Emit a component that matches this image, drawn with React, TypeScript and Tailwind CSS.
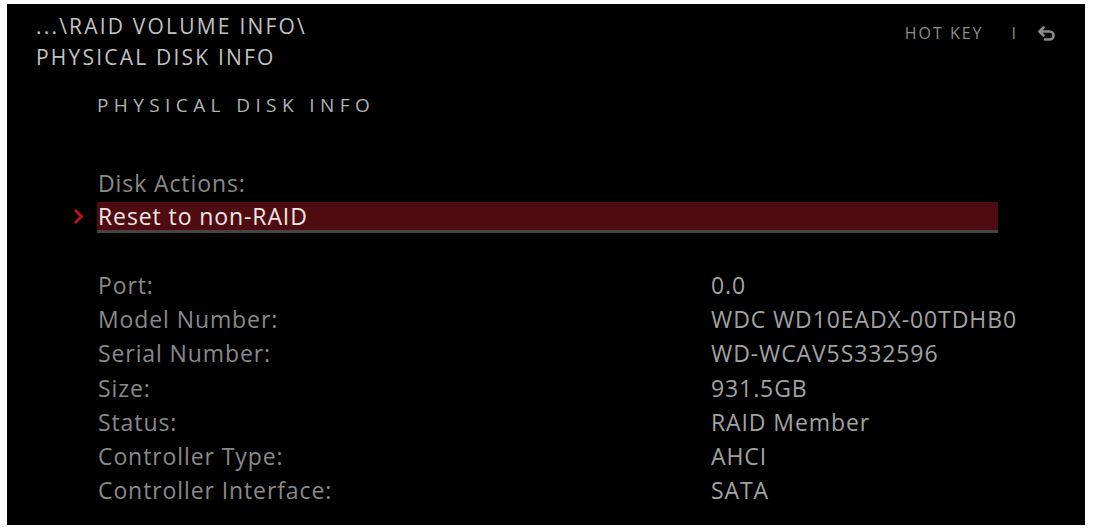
import React from "react";

const ROWS: [string, string][] = [
  ["Port:", "0.0"],
  ["Model Number:", "WDC WD10EADX-00TDHB0"],
  ["Serial Number:", "WD-WCAV5S332596"],
  ["Size:", "931.5GB"],
  ["Status:", "RAID Member"],
  ["Controller Type:", "AHCI"],
  ["Controller Interface:", "SATA"],
];

function BackIcon() {
  return (
    <svg width="20" height="15" viewBox="0 0 20 15" fill="none">
      <path
        d="M6.5 1.5 L2.5 5.5 L6.5 9.5 M3 5.5 H12.5 a4 4 0 0 1 0 8 H8"
        stroke="#8c8c8c"
        strokeWidth="2.6"
        strokeLinecap="round"
        strokeLinejoin="round"
      />
    </svg>
  );
}

export default function App() {
  return (
    <div className="w-[1093px] h-[530px] bg-white pt-[4px] pl-[7px]">
      <div
        className="w-[1078px] h-[521px] bg-black text-[#9a9a9a] overflow-hidden"
        style={{ fontFamily: '"Open Sans", "DejaVu Sans", sans-serif' }}
      >
        {/* header: breadcrumb + hot key */}
        <div className="flex justify-between pl-[29px] pr-[28px] pt-[7px]">
          <div className="text-[21px] leading-[31px] tracking-[2.2px] text-[#c2c2c2]">
            <div>...\RAID VOLUME INFO\</div>
            <div>PHYSICAL DISK INFO</div>
          </div>
          <div className="flex items-center h-[20px] mt-[12px] text-[16px] tracking-[2px] text-[#8c8c8c]">
            <span>HOT KEY</span>
            <span className="ml-[28px] mr-[19px]">I</span>
            <BackIcon />
          </div>
        </div>

        <div className="pl-[90px] pr-[40px]">
          <div className="mt-[17px] text-[19px] tracking-[5.4px] text-[#b2b2b2] leading-[30px]">
            PHYSICAL DISK INFO
          </div>

          <div className="mt-[48px] text-[23px] tracking-[0.9px] leading-[30px] text-[#8a8a8a] pl-[1px]">
            Disk Actions:
          </div>

          <div className="relative mt-[4px] w-[901px]">
            <svg
              className="absolute left-[-24px] top-[6px]"
              width="11"
              height="17"
              viewBox="0 0 11 17"
            >
              <path d="M2 2 L8.5 8.5 L2 15" stroke="#c4121a" strokeWidth="2.8" fill="none" />
            </svg>
            <div className="h-[28px] bg-[#4f0c10] border-b-[3px] border-[#454545] box-content text-[23px] tracking-[0.9px] leading-[28px] text-[#ede6e6] pl-[1px]">
              Reset to non-RAID
            </div>
          </div>

          <div className="mt-[35px] grid grid-cols-[614px_1fr] text-[23px] tracking-[0.9px] leading-[34.2px] whitespace-nowrap">
            {ROWS.map(([k, v]) => (
              <React.Fragment key={k}>
                <div className="text-[#898989] pl-[1px]">{k}</div>
                <div className="text-[#a2a2a2]">{v}</div>
              </React.Fragment>
            ))}
          </div>
        </div>
      </div>
    </div>
  );
}
